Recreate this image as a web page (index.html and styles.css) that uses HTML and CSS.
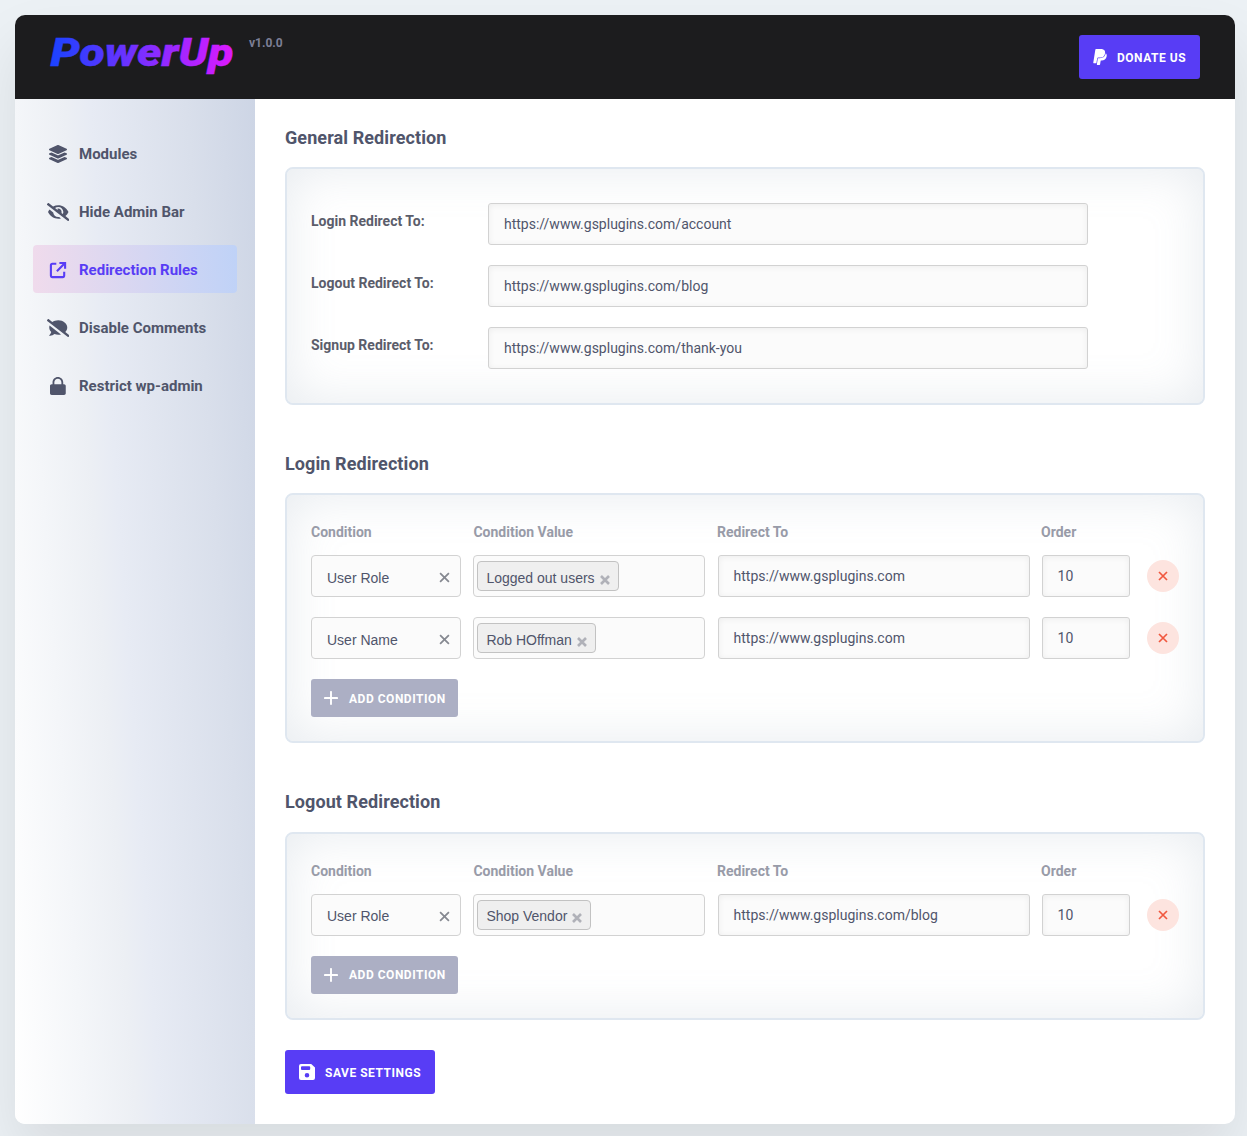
FILE: index.html
```html
<!DOCTYPE html>
<html lang="en">
<head>
<meta charset="utf-8">
<title>PowerUp</title>
<link rel="stylesheet" href="styles.css">
</head>
<body>
<svg class="sprite" aria-hidden="true">
  <symbol id="plus" viewBox="0 0 14 14"><path d="M7 .9v12.2M.9 7h12.2" fill="none" stroke="currentColor" stroke-width="1.9" stroke-linecap="round"/></symbol>
  <symbol id="cross" viewBox="0 0 10 10"><path d="M1 1l8 8M9 1l-8 8" fill="none" stroke="currentColor"/></symbol>
</svg>
<div class="app">
  <header class="header">
    <div class="brand">
      <svg class="logo" viewBox="0 0 186 44">
        <defs><linearGradient id="brand" gradientUnits="userSpaceOnUse" x1="0" y1="0" x2="184" y2="0"><stop offset="0" stop-color="#1a43ff"/><stop offset="1" stop-color="#dc1aff"/></linearGradient></defs>
        <text x="0.5" y="30.5" textLength="183" lengthAdjust="spacingAndGlyphs">PowerUp</text>
      </svg>
      <span class="version">v1.0.0</span>
    </div>
    <button class="btn donate">
      <svg class="paypal" viewBox="0 0 384 512"><path d="M111.4 295.9c-3.5 19.2-17.4 108.7-21.5 134-.3 1.8-1 2.5-3 2.5H12.3c-7.6 0-13.1-6.6-12.1-13.9L58.8 46.6c1.5-9.6 10.1-16.9 20-16.9 152.3 0 165.1-3.7 204 11.4 60.1 23.3 65.6 79.5 44 140.3-21.5 62.6-72.5 89.5-140.1 90.3-43.4.7-69.5-7-75.3 24.2zM357.1 152c-1.8-1.3-2.5-1.8-3 1.3-2 11.4-5.1 22.5-8.8 33.6-39.9 113.8-150.5 103.9-204.5 103.9-6.1 0-10.1 3.3-10.9 9.4-22.6 140.4-27.1 169.7-27.1 169.7-1 7.1 3.5 12.9 10.6 12.9h63.5c8.6 0 15.7-6.3 17.4-14.9.7-5.4-1.1 6.1 14.4-91.3 4.6-22 14.3-19.7 29.3-19.7 71 0 126.4-28.8 142.9-112.3 6.5-34.8 4.6-71.4-23.8-92.6z"/></svg>
      <span>DONATE US</span>
    </button>
  </header>
  <div class="main">
    <nav class="sidebar">
      <a class="item"><span class="ico"><svg height="18" viewBox="0 0 512 512"><path d="M12.41 148.02l232.94 105.67c6.8 3.09 14.49 3.09 21.29 0l232.94-105.67c16.55-7.51 16.55-32.52 0-40.03L266.65 2.31a25.607 25.607 0 0 0-21.29 0L12.41 107.98c-16.55 7.51-16.55 32.53 0 40.04zm487.18 88.28l-58.09-26.33-161.64 73.27c-7.56 3.43-15.59 5.17-23.86 5.17s-16.29-1.74-23.86-5.17L70.51 209.97l-58.1 26.33c-16.55 7.5-16.55 32.5 0 40l232.94 105.59c6.8 3.08 14.49 3.08 21.29 0L499.59 276.3c16.55-7.5 16.55-32.5 0-40zm0 127.8l-57.87-26.23-161.86 73.37c-7.56 3.43-15.59 5.17-23.86 5.17s-16.29-1.74-23.86-5.17L70.29 337.87 12.41 364.1c-16.55 7.5-16.55 32.5 0 40l232.94 105.59c6.8 3.08 14.49 3.08 21.29 0L499.59 404.1c16.55-7.5 16.55-32.5 0-40z"/></svg></span>Modules</a>
      <a class="item"><span class="ico"><svg height="18" viewBox="0 0 640 512"><path d="M320 400c-75.85 0-137.25-58.71-142.9-133.11L72.2 185.82c-13.79 17.3-26.48 35.59-36.72 55.59a32.35 32.35 0 0 0 0 29.19C89.71 376.41 197.07 448 320 448c26.91 0 52.87-4 77.89-10.46L346 397.39a144.13 144.13 0 0 1-26 2.61zm313.82 58.1l-110.55-85.44a331.25 331.25 0 0 0 81.25-102.07 32.35 32.35 0 0 0 0-29.19C550.29 135.59 442.93 64 320 64a308.15 308.15 0 0 0-147.32 37.7L45.46 3.37A16 16 0 0 0 23 6.18L3.37 31.45A16 16 0 0 0 6.18 53.9l588.36 454.73a16 16 0 0 0 22.46-2.81l19.64-25.27a16 16 0 0 0-2.82-22.45zm-183.72-142l-39.3-30.38A94.75 94.75 0 0 0 416 256a94.76 94.76 0 0 0-121.31-92.21A47.65 47.65 0 0 1 304 192a46.64 46.64 0 0 1-1.54 10l-73.61-56.89A142.31 142.31 0 0 1 320 112a143.92 143.92 0 0 1 144 144c0 21.63-5.29 41.79-13.9 60.11z"/></svg></span>Hide Admin Bar</a>
      <a class="item active"><span class="ico"><svg height="18" viewBox="0 0 18 18"><path d="M7.3 2.8H3.4a1.5 1.5 0 0 0-1.5 1.5v10.3a1.5 1.5 0 0 0 1.5 1.5h10.3a1.5 1.5 0 0 0 1.5-1.5v-3.9M10.4 2h5.7v5.7M16 2.1L7.9 10.2" fill="none" stroke="currentColor" stroke-width="2.1"/></svg></span>Redirection Rules</a>
      <a class="item"><span class="ico"><svg height="18" viewBox="0 0 640 512"><path d="M64 240c0 49.6 21.4 95 57 130.7-12.6 50.3-54.3 95.2-54.8 95.8-2.2 2.3-2.8 5.7-1.5 8.7 1.3 2.9 4.1 4.8 7.3 4.8 66.3 0 116-31.8 140.6-51.4 32.7 12.3 69 19.4 107.4 19.4 27.4 0 53.7-3.6 78.4-10L72.9 186.4c-5.6 17.1-8.9 35-8.9 53.6zm569.8 218.1l-114.4-88.4C554.6 334.1 576 289.2 576 240c0-114.9-114.6-208-256-208-65.1 0-124.2 20.1-169.4 52.7L45.5 3.4C38.5-2 28.5-.8 23 6.2L3.4 31.4c-5.4 7-4.2 17 2.8 22.4l588.4 454.7c7 5.5 17 4.2 22.5-2.8l19.6-25.3c5.4-6.8 4.1-16.9-2.9-22.3z"/></svg></span>Disable Comments</a>
      <a class="item"><span class="ico"><svg height="18" viewBox="0 0 448 512"><path d="M400 208h-24v-56C376 68.2 307.8 0 224 0S72 68.2 72 152v56H48c-26.5 0-48 21.5-48 48v208c0 26.5 21.5 48 48 48h352c26.5 0 48-21.5 48-48V256c0-26.5-21.5-48-48-48zm-76 0H124v-56c0-55 45-100 100-100s100 45 100 100v56z"/></svg></span>Restrict wp-admin</a>
    </nav>
    <main class="content">
      <section class="section">
        <h2 class="title">General Redirection</h2>
        <div class="card general">
          <div class="field"><label class="label">Login Redirect To:</label><div class="input">https://www.gsplugins.com/account</div></div>
          <div class="field"><label class="label">Logout Redirect To:</label><div class="input">https://www.gsplugins.com/blog</div></div>
          <div class="field"><label class="label">Signup Redirect To:</label><div class="input">https://www.gsplugins.com/thank-you</div></div>
        </div>
      </section>
      <section class="section">
        <h2 class="title">Login Redirection</h2>
        <div class="card rules">
          <div class="row head"><span>Condition</span><span>Condition Value</span><span>Redirect To</span><span>Order</span></div>
          <div class="row">
            <div class="select">User Role<svg class="clear"><use href="#cross"/></svg></div>
            <div class="multi"><span class="tag">Logged out users<svg class="untag"><use href="#cross"/></svg></span></div>
            <div class="input">https://www.gsplugins.com</div>
            <div class="input">10</div>
            <button class="remove"><svg><use href="#cross"/></svg></button>
          </div>
          <div class="row">
            <div class="select">User Name<svg class="clear"><use href="#cross"/></svg></div>
            <div class="multi"><span class="tag">Rob HOffman<svg class="untag"><use href="#cross"/></svg></span></div>
            <div class="input">https://www.gsplugins.com</div>
            <div class="input">10</div>
            <button class="remove"><svg><use href="#cross"/></svg></button>
          </div>
          <button class="btn add"><svg><use href="#plus"/></svg><span>ADD CONDITION</span></button>
        </div>
      </section>
      <section class="section">
        <h2 class="title">Logout Redirection</h2>
        <div class="card rules">
          <div class="row head"><span>Condition</span><span>Condition Value</span><span>Redirect To</span><span>Order</span></div>
          <div class="row">
            <div class="select">User Role<svg class="clear"><use href="#cross"/></svg></div>
            <div class="multi"><span class="tag">Shop Vendor<svg class="untag"><use href="#cross"/></svg></span></div>
            <div class="input">https://www.gsplugins.com/blog</div>
            <div class="input">10</div>
            <button class="remove"><svg><use href="#cross"/></svg></button>
          </div>
          <button class="btn add"><svg><use href="#plus"/></svg><span>ADD CONDITION</span></button>
        </div>
      </section>
      <button class="btn save">
        <svg viewBox="0 0 16 16"><path fill-rule="evenodd" d="M2 0h10.2L16 3.6V14a2 2 0 0 1-2 2H2a2 2 0 0 1-2-2V2a2 2 0 0 1 2-2zM3 2.2a1 1 0 0 0-1 1V5a1 1 0 0 0 1 1h7.200a1 1 0 0 0 1-1V3.200a1 1 0 0 0-1-1zM8 9a2.300 2.300 0 1 0 0 4.600A2.300 2.300 0 0 0 8 9z"/></svg>
        <span>SAVE SETTINGS</span>
      </button>
    </main>
  </div>
</div>
</body>
</html>
```
FILE: styles.css
```css
* { box-sizing: border-box; }
body {
  margin: 0;
  padding: 15px 12px 12px 15px;
  height: 1136px;
  overflow: hidden;
  background: #ecf1f5;
  font-family: Roboto, sans-serif;
  font-size: 14px;
  color: #50556b;
}
.sprite { position: absolute; width: 0; height: 0; }
svg { display: block; fill: currentColor; flex: none; }
button { border: 0; padding: 0; font-family: inherit; }

.app {
  width: 1220px;
  height: 1109px;
  border-radius: 10px;
  overflow: hidden;
  background: #fff;
  display: flex;
  flex-direction: column;
  box-shadow: 0 30px 60px rgba(0, 0, 0, 0.09);
}
.header {
  height: 84px;
  flex: none;
  background: #1c1c1e;
  padding: 20px 35px;
  display: flex;
  justify-content: space-between;
}
.brand { display: flex; align-items: flex-start; gap: 13px; }
.logo { width: 186px; height: 44px; overflow: visible; }
.logo text {
  font: italic 900 38px Roboto, sans-serif;
  fill: url(#brand);
  stroke: url(#brand);
  stroke-width: 0.4px;
}
.version { font-size: 12px; line-height: 16px; font-weight: 700; color: #7c7f96; }
.btn {
  display: flex;
  align-items: center;
  border-radius: 3px;
  background: #583df5;
  color: #fff;
  font-size: 12px;
  font-weight: 700;
  letter-spacing: 0.52px;
  white-space: nowrap;
}
.btn span { padding-top: 1px; }
.donate { width: 121px; height: 44px; padding-left: 14px; gap: 10px; }
.donate span, .save span { padding-top: 2px; }
.paypal { width: 14px; height: 18px; }

.main { display: flex; flex: 1; }
.sidebar {
  width: 240px;
  padding: 30px 18px;
  display: flex;
  flex-direction: column;
  gap: 10px;
  background: linear-gradient(86deg, #fff 0, #f4f6f9 23%, #eceff4 39%, #e7ebf4 47%, #d9dfeb 78%, #cdd5e5 100%);
}
.item {
  display: flex;
  align-items: center;
  height: 48px;
  padding: 2px 0 0 13px;
  border-radius: 4px;
  font-size: 15px;
  font-weight: 700;
}
.ico { width: 24px; margin-right: 9px; display: flex; justify-content: center; }
.active { color: #583df5; background: linear-gradient(86deg, #f0dbec, #bfd2f7); }

.content { flex: 1; padding: 29.5px 30px 30px; }
.section + .section { margin-top: 49.9px; }
.title { margin: 0 0 20px; font-size: 18px; line-height: 18.5px; font-weight: 700; letter-spacing: 0.09px; }
.card {
  border: 2px solid #dfe7f0;
  border-radius: 8px;
  background: #fff;
  box-shadow: inset 0 0 50px rgba(135, 155, 175, 0.2);
}
.general { padding: 34px 24px; display: flex; flex-direction: column; gap: 20px; }
.field { display: flex; }
.label { width: 177px; line-height: 36px; font-weight: 700; color: #5b5d6b; }
.field .input { width: 600px; }
.input {
  height: 42px;
  border: 1px solid #d2d2d2;
  border-radius: 3px;
  background: #fbfbfb;
  box-shadow: inset 0 1px 6px rgba(0, 0, 0, 0.06);
  padding-left: 15px;
  line-height: 40px;
}
.rules { padding: 24px; display: flex; flex-direction: column; align-items: flex-start; gap: 20px; }
.row {
  display: grid;
  grid-template-columns: 150.4px 231.6px 312.6px 88px 32px;
  column-gap: 12px;
  align-items: center;
}
.row > :nth-child(3) { margin-left: 0.6px; }
.row > :nth-child(5) { margin-left: 5px; }
.head { height: 16px; font-weight: 700; color: #989ba8; line-height: 26px; align-items: start; }
.head > :nth-child(3) { margin-left: 0; }
.head > :nth-child(4) { margin-left: -0.5px; }
.select, .multi {
  height: 42px;
  border: 1px solid #d2d2d2;
  border-radius: 4px;
  background: #fbfbfb;
  display: flex;
  align-items: center;
  font-family: "Liberation Sans", sans-serif;
}
.select { justify-content: space-between; padding: 3px 10px 0 15px; }
.clear { width: 11px; height: 11px; color: #868991; stroke-width: 1.6; }
.multi { padding-left: 3px; }
.tag {
  height: 30px;
  border: 1px solid #c2c2c2;
  border-radius: 4px;
  background: #efefef;
  display: flex;
  align-items: center;
  padding: 3px 8px 0;
}
.untag { width: 10px; height: 10px; margin: 4px 0 0 5px; color: #b0b1b8; stroke-width: 2.6; }
.remove {
  width: 32px;
  height: 32px;
  border-radius: 50%;
  background: #fde4df;
  color: #f1583f;
  display: flex;
  align-items: center;
  justify-content: center;
}
.remove svg { width: 10px; height: 10px; stroke-width: 1.7; }
.add { width: 147px; height: 38px; background: #acafc4; padding-left: 12.5px; gap: 11.5px; }
.add svg { width: 14px; height: 14px; }
.save { width: 150px; height: 44px; margin-top: 30px; padding-left: 14px; gap: 10px; }
.save svg { width: 16px; height: 16px; }
```
